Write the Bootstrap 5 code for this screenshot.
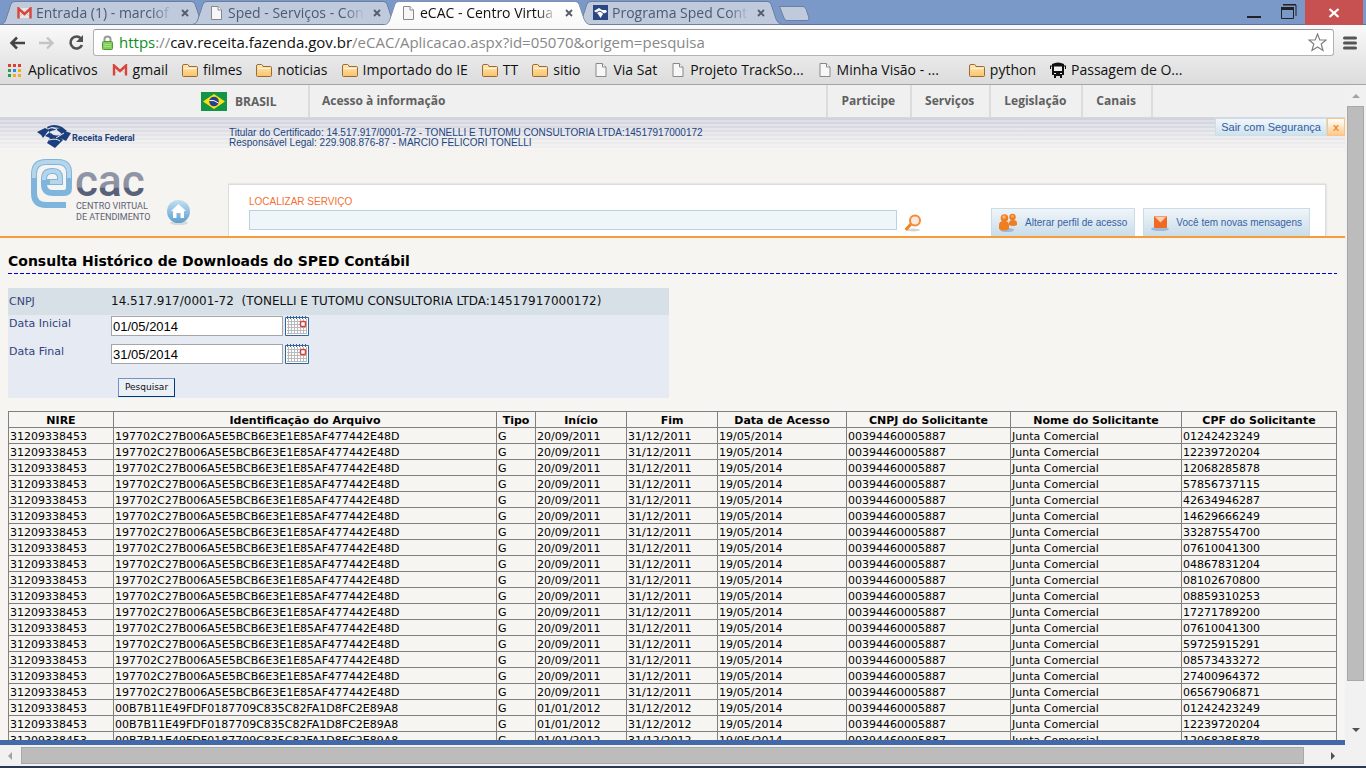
<!DOCTYPE html>
<html lang="pt-BR">
<head>
<meta charset="utf-8">
<meta name="viewport" content="width=device-width, initial-scale=1">
<title>eCAC - Centro Virtual de Atendimento</title>
<link rel="stylesheet" href="https://cdn.jsdelivr.net/npm/bootstrap@5.3.0/dist/css/bootstrap.min.css">
<style>
  body { font-family: "DejaVu Sans", Verdana, sans-serif; font-size: 11px; line-height: 15px; color: #000; background: #f6f5f1; }
  a { text-decoration: none; color: inherit; }
  svg { flex: none; display: block; }
  .shell-ui { font-family: "Open Sans", "Noto Sans", sans-serif; }

  /* browser frame */
  .tab-strip { height: 25px; background: #7a99c8; border-bottom: 1px solid #5a73a0; }
  .tab-item { width: 192px; height: 25px; padding: 0 3px 0 17px; font-size: 14px; line-height: 25px; color: #4d5a6e; background: none; border: 0; text-align: left; }
  .tab-item .tab-shape { position: absolute; left: 0; top: 0; z-index: 0; }
  .tab-item > .tab-body { position: relative; z-index: 1; }
  .tab-item.is-active { z-index: 3; color: #111; }
  .tab-title { overflow: hidden; white-space: nowrap; -webkit-mask-image: linear-gradient(90deg, #000 85%, transparent); mask-image: linear-gradient(90deg, #000 85%, transparent); }
  .win-close { width: 58px; height: 25px; background: #c75050; border: 0; }
  .win-group { margin-right: 3px; }
  .win-btn { background: none; border: 0; }
  .browser-bar { background: linear-gradient(#f9f9f9, #dcdcdc); border-bottom: 1px solid #a5a5a5; height: 60px; }
  .address-row { height: 33px; padding: 4px 8px 2px 9px; }
  .address-box { height: 27px; border: 1px solid #b3b3b3; border-top-color: #999; border-radius: 3px; background: #fff; padding: 0 6px; font-size: 15px; line-height: 24px; color: #888; }
  .address-box .address-text { padding-bottom: 2px; }
  .address-box .scheme { color: #0a8f1f; }
  .address-box .host { color: #111; }
  .bookmark-row { height: 24px; font-size: 14px; line-height: 22px; color: #111; padding-left: 8px; gap: 14px; }
  .bookmark-row a { gap: 5px; white-space: nowrap; }

  /* government bar */
  .gov-bar { height: 33px; background: #f0f0f0; border-bottom: 1px solid #d4d6e0; font-size: 12px; font-weight: 700; color: #606060; padding-right: 192px; }
  .gov-brand { width: 310px; padding-left: 201px; gap: 8px; border-right: 2px solid #dcdcdc; }
  .gov-nav a { padding: 0 14px 0 12px; line-height: 32px; border-left: 2px solid #dcdcdc; }
  nav.gov-nav a { padding: 0 15px 0 13px; }
  .gov-nav a:last-child { border-right: 2px solid #dcdcdc; }

  /* eCAC header */
  .ecac-header { height: 120px; border-bottom: 2px solid #f79c3a; font-family: "Liberation Sans", Arial, sans-serif;
    background: repeating-linear-gradient(rgba(255,255,255,0) 0 2px, rgba(255,255,255,.3) 2px 4px) 0 0 / 100% 34px no-repeat, linear-gradient(#cfd1dc, #e4e4e8 18px, #f5f4f0 34px); }
  .brand-col { width: 228px; }
  .holder { font-size: 10px; line-height: 10px; color: #1d4580; padding: 10px 0 0 1px; }
  .exit-group { height: 18px; font-size: 11px; line-height: 16px; color: #2f5ca3; }
  .exit-group button { padding: 0 5px; color: inherit; border: 1px solid #cbdfeb; background: linear-gradient(#f2f6fa, #cfe2ec); }
  .exit-group .exit-x { color: #f08a24; font-weight: 700; border-color: #fdc583; background: linear-gradient(#fff, #fdc98b); }
  .search-panel { height: 52px; margin-right: 19px; padding: 0 15px 0 20px; background: #fff; border: 1px solid #dcdcd8; border-bottom: 0; box-shadow: 0 0 2px #ccc; }
  .search-field { max-width: 648px; padding-bottom: 6px; }
  .search-panel label { font-size: 10px; line-height: 12px; color: #f37032; margin-bottom: 2px; }
  .search-box { height: 20px; border: 1px solid #b9d3e6; background: #f0f5fa; border-radius: 0; padding: 0 4px; font-size: 11px; }
  .panel-btn { height: 28px; font-size: 10px; color: #3561a6; padding: 0 7px 0 6px; gap: 5px; border: 1px solid #c9dce8; border-bottom: 0; background: linear-gradient(#f0f5f9, #c9dde9); white-space: nowrap; }

  /* query page */
  .page-body { padding: 0 8px; background: #f6f5f1; overflow: hidden; }
  .page-title { font-size: 14px; line-height: 20px; font-weight: 700; margin: 13px 0 2px; }
  .dash-rule { height: 1px; background: repeating-linear-gradient(90deg, #00c 0 4px, transparent 4px 6px); }
  .query-form { width: 661px; height: 110px; margin: 14px 0 13px; background: #e6eaf3; color: #33437a; }
  .query-form .cnpj-row { height: 27px; background: #d7e0e7; }
  .query-form .lbl { width: 103px; padding-left: 1px; }
  .cnpj-value { font-size: 12px; color: #111; white-space: pre; }
  .date-row { height: 28px; padding-top: 1px; gap: 2px; }
  .date-row .win-btn { height: 20px; }
  .date-box { width: 172px; height: 20px; border: 1px solid #a6a6a6; border-radius: 0; padding: 0 1px; font: 13px "Liberation Sans", Arial, sans-serif; color: #000; background: #fff; }
  .date-row .lbl { width: 101px; }
  .search-btn { font-size: 9px; line-height: 17px; height: 19px; width: 57px; margin: 7px 0 0 110px; padding: 0; color: #111; background: #eaf0f6; border: 1px solid #7592c6; border-right-color: #003c74; border-bottom-color: #003c74; }
  .hist { table-layout: fixed; border-collapse: collapse; width: 100%; }
  .hist th, .hist td { border: 1px solid #808080; padding: 2px 1px 0; height: 16px; line-height: 13px; white-space: nowrap; overflow: hidden; }
  .hist th { text-align: center; font-weight: 700; }

  /* scroll bars and lower edge */
  .vbar { width: 21px; background: #f1f1f1; padding: 0 2px; }
  .vbar .arrow { height: 21px; }
  .vbar .thumb { height: 575px; background: #bcbcbc; border: 1px solid #a8a8a8; }
  .hbar { height: 21px; background: #f1f1f1; padding-right: 30px; }
  .hbar .thumb { height: 17px; background: #bcbcbc; border: 1px solid #a8a8a8; margin-right: 27px; }
  .status-wrap { background: #f1f1f1; }
  .status-line { height: 5px; background: #4369a8; margin-right: 21px; }
  .task-edge { height: 2px; background: #2b384d; }
</style>
</head>
<body>
<svg width="0" height="0" class="position-absolute" aria-hidden="true">
  <defs>
    <linearGradient id="gFold" x2="0" y2="1"><stop stop-color="#ffe9b8"/><stop offset="1" stop-color="#f9c368"/></linearGradient>
    <linearGradient id="gGray" x2="0" y2="1"><stop offset=".3" stop-color="#9297a8"/><stop offset=".62" stop-color="#8a8fa2"/><stop offset=".64" stop-color="#596079"/><stop offset="1" stop-color="#596079"/></linearGradient>
    <linearGradient id="gHome" x2="0" y2="1"><stop stop-color="#c4e0f2"/><stop offset="1" stop-color="#5c9fd0"/></linearGradient>
    <linearGradient id="gTab" x2="0" y2="1"><stop stop-color="#fff"/><stop offset="1" stop-color="#f9f9f9"/></linearGradient>
    <symbol id="tabOff" viewBox="0 0 206 25"><path d="M0 24.500C4 24 5 22 6 19L11 4Q12 1.500 15 1.500H191Q194 1.500 195 4L200 19Q201 23 206 24.500Z" fill="#bfcadd" stroke="#6e7f9e"/></symbol>
    <symbol id="tabOn" viewBox="0 0 206 25"><path d="M0 25C4 24 5 22 6 19L11 4Q12 1.500 15 1.500H191Q194 1.500 195 4L200 19Q201 23 206 25" fill="url(#gTab)" stroke="#8090ad"/></symbol>
    <symbol id="page" viewBox="0 0 11 14"><path d="M.5.500H7L10.500 4V13.500H.5Z" fill="#f7f7f7" stroke="#888"/><path d="M7 .5V4H10.500" fill="#fff" stroke="#888"/></symbol>
    <symbol id="folder" viewBox="0 0 16 13"><path d="M1.500 12.500Q.5 12.500 .5 11.500V2Q.5.500 2 .5H5.500Q6.500.500 7 2.500H14.500Q15.500 2.500 15.500 3.500V11.500Q15.500 12.500 14.500 12.500Z" fill="url(#gFold)" stroke="#9a6b3a"/><path d="M2 4.500H14" stroke="#fff4d8"/></symbol>
    <symbol id="gm" viewBox="0 0 15 12"><path d="M1 1H14V11H1Z" fill="#e6e6e6"/><path d="M1 11L6 6M14 11L9 6" stroke="#c5c5c5"/><path d="M1.500 11.500V1.500L7.500 7L13.500 1.500V11.500" fill="none" stroke="#d8453b" stroke-width="2.400"/></symbol>
    <symbol id="x" viewBox="0 0 8 8"><path d="M1 1L7 7M7 1L1 7" stroke="#555c68" stroke-width="1.800"/></symbol>
    <symbol id="cal" viewBox="0 0 24 20"><path d="M.5 1.500H23.500V19.500H.5Z" fill="#fff" stroke="#336699"/><path d="M2 5.500H22M2 8.500H22M2 11.500H22M2 14.500H22M2 17.500H22M3.500 3V18M6.500 3V18M9.500 3V18M12.500 3V18M15.500 3V18M18.500 3V18M21.500 3V18" stroke="#b9b9b9"/><path d="M2.500 0V3M5.500 0V3M8.500 0V3M11.500 0V3M14.500 0V3M17.500 0V3M20.500 0V3" stroke="#336699"/><rect x="15.500" y="5.500" width="5" height="5" rx="1" fill="#fff" stroke="#d6403f" stroke-width="1.500"/></symbol>
  </defs>
</svg>

<div class="d-flex flex-column vh-100 overflow-hidden">
  <header class="shell-ui flex-shrink-0">
    <div class="tab-strip d-flex">
      <button class="tab-item position-relative flex-shrink-0"><svg class="tab-shape" width="206" height="25"><use href="#tabOff"/></svg>
        <span class="tab-body d-flex align-items-center"><svg width="15" height="12"><use href="#gm"/></svg><span class="tab-title flex-grow-1 ms-1 me-2">Entrada (1) - marciof</span><svg width="8" height="8"><use href="#x"/></svg></span></button>
      <button class="tab-item position-relative flex-shrink-0"><svg class="tab-shape" width="206" height="25"><use href="#tabOff"/></svg>
        <span class="tab-body d-flex align-items-center"><svg width="15" height="14"><use href="#page"/></svg><span class="tab-title flex-grow-1 ms-1 me-2">Sped - Serviços - Con</span><svg width="8" height="8"><use href="#x"/></svg></span></button>
      <button class="tab-item is-active position-relative flex-shrink-0"><svg class="tab-shape" width="206" height="25"><use href="#tabOn"/></svg>
        <span class="tab-body d-flex align-items-center"><svg width="15" height="14"><use href="#page"/></svg><span class="tab-title flex-grow-1 ms-1 me-2">eCAC - Centro Virtua</span><svg width="8" height="8"><use href="#x"/></svg></span></button>
      <button class="tab-item position-relative flex-shrink-0"><svg class="tab-shape" width="206" height="25"><use href="#tabOff"/></svg>
        <span class="tab-body d-flex align-items-center"><svg width="15" height="15" viewBox="0 0 15 15"><path d="M0 0H15V15H0Z" fill="#2c4583"/><path d="M1 6L6 3L9 5L13 5L14 7L10 9L7.500 13L5 9Z" fill="#fff"/><path d="M3 8L7 6L11 9" stroke="#2c4583" fill="none"/></svg><span class="tab-title flex-grow-1 ms-1 me-2">Programa Sped Cont</span><svg width="8" height="8"><use href="#x"/></svg></span></button>
      <svg class="ms-2" width="36" height="25" viewBox="0 0 36 25" aria-hidden="true"><path d="M3.500 6.500H27Q29 6.500 30 9L33 18Q33 20.500 31 20.500H11Q9 20.500 8 18Z" fill="#bfcadd" stroke="#6e7f9e"/></svg>
      <div class="win-group d-flex ms-auto">
        <button class="win-btn p-0 me-3" aria-label="Minimizar"><svg width="22" height="25"><path d="M6 17H20" stroke="#222" stroke-width="2"/></svg></button>
        <button class="win-btn p-0 me-2" aria-label="Restaurar"><svg width="18" height="25"><path d="M2.500 9V18.500H14.500V9M4 5H17V16" fill="none" stroke="#222"/><path d="M2 8.500H15" stroke="#222" stroke-width="3"/><path d="M4 4.500H17" stroke="#222"/></svg></button>
        <button class="win-close d-flex justify-content-center align-items-center" aria-label="Fechar"><svg width="12" height="10" viewBox="0 0 12 10"><path d="M1.500 1L10.500 9M10.500 1L1.500 9" stroke="#fff" stroke-width="2.300"/></svg></button>
      </div>
    </div>

    <div class="browser-bar">
      <div class="address-row d-flex align-items-center">
        <svg width="17" height="14" viewBox="0 0 17 14"><path d="M16 7H3M8 1.500L2.500 7L8 12.500" fill="none" stroke="#444" stroke-width="2.600"/></svg>
        <svg class="ms-2 me-2 ps-1" width="21" height="14" viewBox="0 0 17 14"><path d="M1 7H14M9 1.500L14.500 7L9 12.500" fill="none" stroke="#c4c4c4" stroke-width="2.400"/></svg>
        <svg class="ms-1 me-2" width="18" height="18" viewBox="0 0 18 18"><path d="M14 4.500A6 6 0 1 0 15 11" fill="none" stroke="#505050" stroke-width="2.600"/><path d="M16 1V8H9Z" fill="#505050"/></svg>
        <div class="address-box d-flex align-items-center flex-grow-1">
          <svg width="15" height="16" viewBox="0 0 13 16"><path d="M3.500 7V4Q3.500 1.500 6.500 1.500T9.500 4V7" fill="none" stroke="#999" stroke-width="2"/><rect x="1.500" y="6.500" width="10" height="8" rx="1" fill="#82cf58" stroke="#4f9a36"/><path d="M3 9.500H10M3 11.500H10" stroke="#a5e085"/></svg>
          <span class="address-text flex-grow-1 ms-1 text-nowrap overflow-hidden"><span class="scheme">https</span>://<span class="host">cav.receita.fazenda.gov.br</span>/eCAC/Aplicacao.aspx?id=05070&amp;origem=pesquisa</span>
          <svg width="19" height="19" viewBox="0 0 19 19"><path d="M9.500 1L11.800 7H18L13.200 11L15 17.500L9.500 14L4 17.500L5.800 11L1 7H7.200Z" fill="#fff" stroke="#808080" stroke-width="1.200"/></svg>
        </div>
        <svg class="ms-2" width="16" height="16" viewBox="0 0 14 16"><path d="M1.500 3H12.500M1.500 8H12.500M1.500 13H12.500" stroke="#555" stroke-width="3" stroke-linecap="round"/></svg>
      </div>
      <nav class="bookmark-row d-flex align-items-center overflow-hidden" aria-label="Favoritos">
        <a href="#" class="d-flex align-items-center"><svg width="15" height="13"><path d="M0 1.500H3M5 1.500H8M10 1.500H13" stroke="#e23c33" stroke-width="3"/><path d="M0 6.500H3" stroke="#2a9d4f" stroke-width="3"/><path d="M5 6.500H8" stroke="#3c7ff0" stroke-width="3"/><path d="M10 6.500H13M5 11.500H8M10 11.500H13" stroke="#f2ac1c" stroke-width="3"/><path d="M0 11.500H3" stroke="#2a9d4f" stroke-width="3"/></svg>Aplicativos</a>
        <a href="#" class="d-flex align-items-center"><svg width="16" height="12"><use href="#gm"/></svg>gmail</a>
        <a href="#" class="d-flex align-items-center"><svg width="16" height="13"><use href="#folder"/></svg>filmes</a>
        <a href="#" class="d-flex align-items-center"><svg width="16" height="13"><use href="#folder"/></svg>noticias</a>
        <a href="#" class="d-flex align-items-center"><svg width="16" height="13"><use href="#folder"/></svg>Importado do IE</a>
        <a href="#" class="d-flex align-items-center"><svg width="16" height="13"><use href="#folder"/></svg>TT</a>
        <a href="#" class="d-flex align-items-center"><svg width="16" height="13"><use href="#folder"/></svg>sitio</a>
        <a href="#" class="d-flex align-items-center"><svg width="14" height="14"><use href="#page"/></svg>Via Sat</a>
        <a href="#" class="d-flex align-items-center"><svg width="14" height="14"><use href="#page"/></svg>Projeto TrackSo...</a>
        <a href="#" class="d-flex align-items-center"><svg width="14" height="14"><use href="#page"/></svg>Minha Visão - ...</a>
        <a href="#" class="d-flex align-items-center ms-3"><svg width="16" height="13"><use href="#folder"/></svg>python</a>
        <a href="#" class="d-flex align-items-center"><svg width="16" height="16" viewBox="0 0 16 16"><path d="M2 2Q8 -1 14 2V13H12V16H10V14H6V16H4V13H2Z" fill="#111"/><path d="M4 4H12V9H4Z" fill="#eee"/><path d="M4 11.500H6M10 11.500H12" stroke="#eee"/><path d="M.5 4V7M15.500 4V7M0 4H16" stroke="#111"/></svg>Passagem de O...</a>
      </nav>
    </div>
  </header>

  <div class="d-flex flex-grow-1 overflow-hidden">
    <div class="flex-grow-1 d-flex flex-column overflow-hidden">
      <div class="gov-bar shell-ui d-flex flex-shrink-0">
        <a href="#" class="gov-brand d-flex align-items-center flex-shrink-0"><svg width="26" height="19" viewBox="0 0 26 19"><path d="M0 0H26V19H0Z" fill="#149447"/><path d="M13 2L24 9.500L13 17L2 9.500Z" fill="#fbe310"/><circle cx="13" cy="9.500" r="4.800" fill="#28408f"/><path d="M8.500 8.500Q13 7.500 17.500 11" stroke="#fff" fill="none"/></svg>BRASIL</a>
        <div class="gov-nav d-flex flex-grow-1"><a href="#" class="border-0">Acesso à informação</a></div>
        <nav class="gov-nav d-flex"><a href="#">Participe</a><a href="#">Serviços</a><a href="#">Legislação</a><a href="#">Canais</a></nav>
      </div>

      <div class="ecac-header d-flex flex-shrink-0">
        <div class="brand-col flex-shrink-0">
          <svg width="228" height="118" viewBox="0 0 228 118" role="img" aria-label="Receita Federal eCAC">
            <path d="M37 14L45 10L49 12L43 20Q41 16 37 14Z M47 9Q54 5 62 9L67 13L62 16L57 12Q52 12 49 14Z M50 9Q54 12 60 10" fill="#1b3f7c"/>
            <path d="M45 18L50 14Q54 19 60 17L64 13L71 15L66 23L60 20L63 22L55 30L47 25L50 20Z" fill="#1b3f7c"/>
            <path d="M48 11Q53 8 57 12L50 15M56 20L64 15M49 22Q56 20 60 23" fill="none" stroke="#eeeef0" stroke-width="1"/>
            <text x="72" y="23" font-family="Roboto" font-weight="700" font-size="9" fill="#1b3f7c">Receita Federal</text>
            <path d="M66 87H46Q34 87 34 75V56Q34 44 46 44H58Q69 44 69 55V70Q69 75 64 75H53Q44 75 44 66V61Q44 53 52 53H53Q60 53 60 60V64H45" fill="none" stroke="#7fb5dc" stroke-width="6"/>
            <path d="M34 60V56Q34 44 46 44H58Q69 44 69 55V60M44 62V61Q44 53 52 53H53Q60 53 60 60V64H50" fill="none" stroke="#b5d5eb" stroke-width="4"/>
            <text x="75" y="78" font-family="Roboto" font-weight="500" font-size="44" fill="url(#gGray)">cac</text>
            <text x="76" y="91" font-family="Roboto" font-size="9" fill="#5d6275">CENTRO VIRTUAL</text>
            <text x="76" y="102" font-family="Roboto" font-size="9" fill="#5d6275">DE ATENDIMENTO</text>
            <ellipse cx="179" cy="105" rx="9" ry="2" fill="#d8d8d6"/><circle cx="178.500" cy="93.500" r="11.500" fill="url(#gHome)"/>
            <path d="M178.500 86L186 93H184V100H180.500V95H176.500V100H173V93H171Z" fill="#fff"/>
          </svg>
        </div>
        <div class="flex-grow-1 d-flex flex-column overflow-hidden">
          <div class="d-flex justify-content-between align-items-start">
            <div class="holder">Titular do Certificado: 14.517.917/0001-72 - TONELLI E TUTOMU CONSULTORIA LTDA:14517917000172<br>Responsável Legal: 229.908.876-87 - MARCIO FELICORI TONELLI</div>
            <div class="exit-group d-flex"><button>Sair com Segurança</button><button class="exit-x">x</button></div>
          </div>
          <div class="search-panel d-flex align-items-end mt-auto">
            <div class="search-field flex-grow-1 d-flex flex-column"><label for="svc">LOCALIZAR SERVIÇO</label><input id="svc" class="search-box w-100"></div>
            <button class="win-btn p-0 ms-2 me-auto pb-1" aria-label="Localizar"><svg width="17" height="18" viewBox="0 0 17 18"><ellipse cx="8" cy="16" rx="7" ry="1.500" fill="#d5d5d5"/><path d="M6 10L1.500 15" stroke="#f58220" stroke-width="3" stroke-linecap="round"/><circle cx="10" cy="6.500" r="5" fill="#fde8dc" stroke="#f58a3a" stroke-width="2"/></svg></button>
            <button class="panel-btn d-flex align-items-center me-2"><svg width="22" height="20" viewBox="0 0 22 20"><ellipse cx="9" cy="17" rx="7" ry="2" fill="#9bbbd6"/><path d="M11 10Q11 7 15 7T19 10V12Q15 14 11 12Z M1 12Q1 8 6 8T11 12V16Q6 19 1 16Z" fill="#f07d1e"/><circle cx="14.500" cy="4" r="3.200" fill="#f07d1e"/><circle cx="6.500" cy="5" r="3.800" fill="#f07d1e"/><circle cx="6" cy="4" r="1.800" fill="#f8b478"/><circle cx="14.500" cy="3.300" r="1.400" fill="#f8b478"/></svg>Alterar perfil de acesso</button>
            <button class="panel-btn d-flex align-items-center"><svg width="21" height="20" viewBox="0 0 21 20"><ellipse cx="10" cy="16" rx="9" ry="2" fill="#9bbbd6"/><rect x="4" y="3" width="13" height="12" rx="1" fill="#f26a22"/><path d="M4.500 3.500L10.500 9.500L16.500 3.500Z" fill="#fbd0b5"/></svg>Você tem novas mensagens</button>
          </div>
        </div>
      </div>

      <main class="page-body flex-grow-1">
        <h1 class="page-title">Consulta Histórico de Downloads do SPED Contábil</h1>
        <div class="dash-rule"></div>
        <form class="query-form mw-100">
          <div class="cnpj-row d-flex align-items-center"><span class="lbl">CNPJ</span><span class="cnpj-value">14.517.917/0001-72  (TONELLI E TUTOMU CONSULTORIA LTDA:14517917000172)</span></div>
          <div class="date-row d-flex"><label class="lbl" for="d1">Data Inicial</label><input id="d1" class="date-box" value="01/05/2014"><button type="button" class="win-btn p-0" aria-label="Calendário"><svg width="24" height="20"><use href="#cal"/></svg></button></div>
          <div class="date-row d-flex"><label class="lbl" for="d2">Data Final</label><input id="d2" class="date-box" value="31/05/2014"><button type="button" class="win-btn p-0" aria-label="Calendário"><svg width="24" height="20"><use href="#cal"/></svg></button></div>
          <button type="button" class="search-btn">Pesquisar</button>
        </form>
        <table class="hist">
          <colgroup><col style="width:105px"><col><col style="width:39px"><col style="width:91px"><col style="width:91px"><col style="width:129px"><col style="width:164px"><col style="width:171px"><col style="width:155px"></colgroup>
          <thead><tr><th>NIRE</th><th>Identificação do Arquivo</th><th>Tipo</th><th>Início</th><th>Fim</th><th>Data de Acesso</th><th>CNPJ do Solicitante</th><th>Nome do Solicitante</th><th>CPF do Solicitante</th></tr></thead>
          <tbody id="rows"></tbody>
        </table>
      </main>
    </div>
    <div class="vbar d-flex flex-column flex-shrink-0">
      <div class="arrow d-flex justify-content-center align-items-center flex-shrink-0"><svg width="8" height="4"><path d="M0 4L4 0L8 4Z" fill="#a3a3a3"/></svg></div>
      <div class="thumb"></div>
      <div class="arrow d-flex justify-content-center align-items-center mt-auto mb-0"><svg width="8" height="4"><path d="M0 0L4 4L8 0Z" fill="#505050"/></svg></div>
    </div>
  </div>
  <footer class="flex-shrink-0">
    <div class="status-wrap"><div class="status-line"></div></div>
    <div class="hbar d-flex align-items-center">
      <svg class="ms-2 me-2" width="5" height="8"><path d="M4 0L0 4L4 8Z" fill="#a3a3a3"/></svg>
      <div class="thumb flex-grow-1"></div>
      <svg width="5" height="8"><path d="M0 0L4 4L0 8Z" fill="#505050"/></svg>
    </div>
    <div class="task-edge"></div>
  </footer>
</div>
<script>
  const groups = [
    { id: '197702C27B006A5E5BCB6E3E1E85AF477442E48D', from: '20/09/2011', to: '31/12/2011',
      cpf: ['01242423249','12239720204','12068285878','57856737115','42634946287','14629666249','33287554700','07610041300','04867831204','08102670800','08859310253','17271789200','07610041300','59725915291','08573433272','27400964372','06567906871'] },
    { id: '00B7B11E49FDF0187709C835C82FA1D8FC2E89A8', from: '01/01/2012', to: '31/12/2012',
      cpf: ['01242423249','12239720204','12068285878'] }
  ];
  document.getElementById('rows').innerHTML = groups.flatMap(g => g.cpf.map(c =>
    '<tr>' + ['31209338453', g.id, 'G', g.from, g.to, '19/05/2014', '00394460005887', 'Junta Comercial', c]
      .map(v => `<td>${v}</td>`).join('') + '</tr>')).join('');
</script>
<script src="https://cdn.jsdelivr.net/npm/bootstrap@5.3.0/dist/js/bootstrap.bundle.min.js"></script>
</body>
</html>
